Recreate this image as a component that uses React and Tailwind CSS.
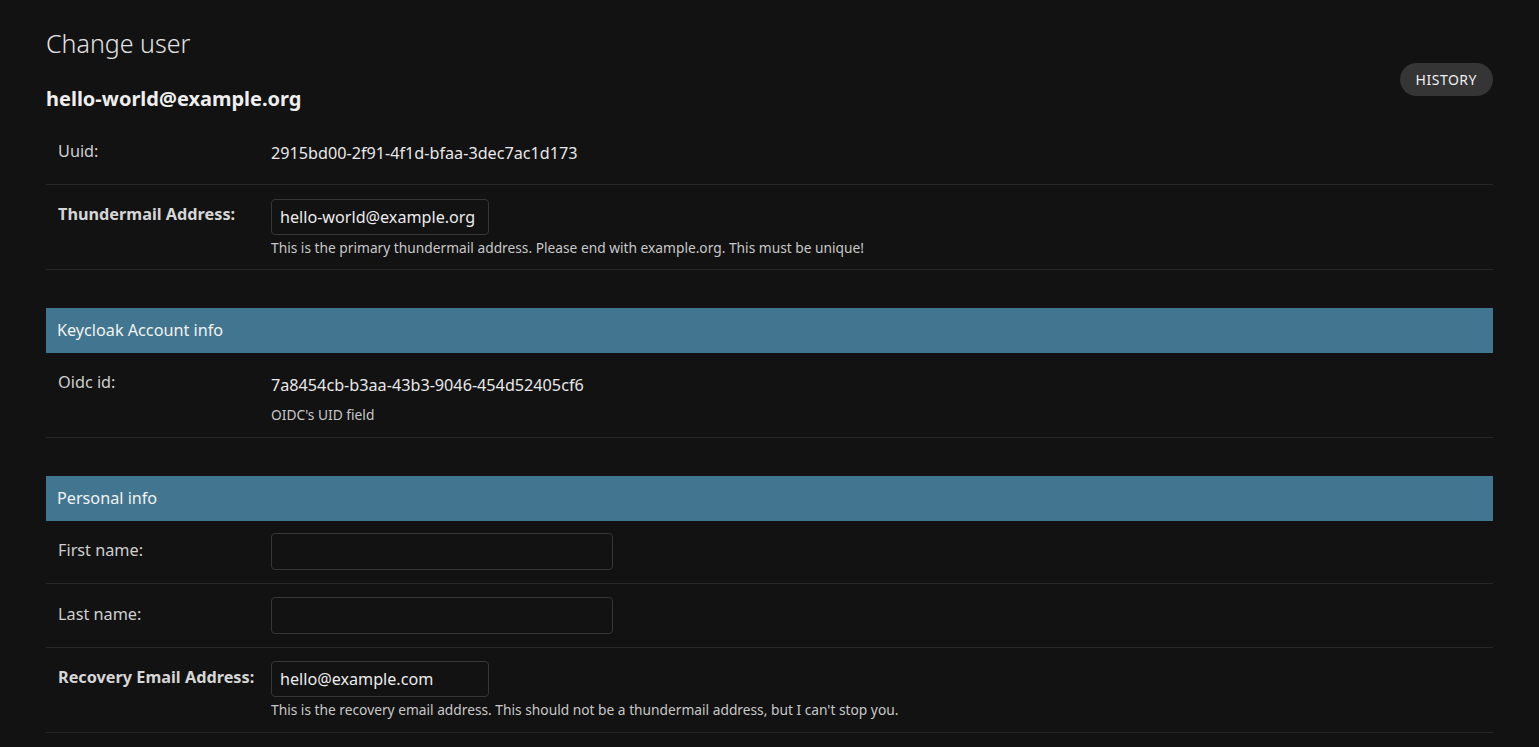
import React from "react";

function Caption({ children }) {
  return (
    <div className="h-[45px] flex items-center pl-[11px] bg-[#427690] text-[16.2px] text-[#f2f2f2]">
      {children}
    </div>
  );
}

function Help({ children, className = "" }) {
  return <div className={`text-[13.75px] leading-[18px] text-[#c8c8c8] ${className}`}>{children}</div>;
}

function Row({ label, bold, labelPad, className, children }) {
  return (
    <div className={`flex px-3 border-b border-[#272727] ${className}`}>
      <div
        className={`w-[213px] shrink-0 leading-5 text-[16.25px] ${labelPad} ${
          bold ? "font-bold text-[#d6d6d6]" : "text-[#cfcfcf]"
        }`}
      >
        {label}
      </div>
      <div className="flex flex-col">{children}</div>
    </div>
  );
}

function TextInput({ value, width, height }) {
  return (
    <input
      readOnly
      value={value}
      className={`${width} ${height} rounded border border-[#363636] bg-[#121212] px-2 text-[16.15px] text-[#ececec] outline-none`}
    />
  );
}

export default function App() {
  return (
    <div
      className="min-h-screen bg-[#121212] px-[46px] pt-[27px] text-[#e0e0e0]"
      style={{ fontFamily: '"Noto Sans", "Open Sans", sans-serif' }}
    >
      <h1 className="text-[25px] leading-8 font-light text-[#e2e2e2]">Change user</h1>
      <div className="flex items-start justify-between">
        <h2 className="mt-[26px] text-[20px] leading-7 font-bold text-[#eeeeee]">hello-world@example.org</h2>
        <button className="mt-[4px] h-[33px] rounded-full bg-[#353535] px-[16px] text-[14px] tracking-[0.5px] text-[#f0f0f0]">
          HISTORY
        </button>
      </div>

      <div className="mt-[18px]">
        <Row label="Uuid:" labelPad="pt-0" className="pt-[10px] pb-[19px]">
          <div className="leading-6 text-[16.2px] text-[#e8e8e8]">2915bd00-2f91-4f1d-bfaa-3dec7ac1d173</div>
        </Row>
        <Row label="Thundermail Address:" bold labelPad="pt-[5px]" className="pt-[14px] pb-[12px]">
          <TextInput value="hello-world@example.org" width="w-[218px]" height="h-[36px]" />
          <Help className="mt-[4px]">
            This is the primary thundermail address. Please end with example.org. This must be unique!
          </Help>
        </Row>
      </div>

      <div className="mt-[38px]">
        <Caption>Keycloak Account info</Caption>
        <Row label="Oidc id:" labelPad="pt-[6px]" className="pt-[13px] pb-[13px]">
          <div className="py-[7px] leading-6 text-[16.2px] text-[#e8e8e8]">7a8454cb-b3aa-43b3-9046-454d52405cf6</div>
          <Help className="mt-[2px]">OIDC's UID field</Help>
        </Row>
      </div>

      <div className="mt-[38px]">
        <Caption>Personal info</Caption>
        <Row label="First name:" labelPad="pt-[7px]" className="pt-[12px] pb-[13px]">
          <TextInput value="" width="w-[342px]" height="h-[37px]" />
        </Row>
        <Row label="Last name:" labelPad="pt-[7px]" className="pt-[13px] pb-[13px]">
          <TextInput value="" width="w-[342px]" height="h-[37px]" />
        </Row>
        <Row label="Recovery Email Address:" bold labelPad="pt-[6px]" className="pt-[13px] pb-[13px]">
          <TextInput value="hello@example.com" width="w-[218px]" height="h-[36px]" />
          <Help className="mt-[4px]">
            This is the recovery email address. This should not be a thundermail address, but I can't stop you.
          </Help>
        </Row>
      </div>
    </div>
  );
}
